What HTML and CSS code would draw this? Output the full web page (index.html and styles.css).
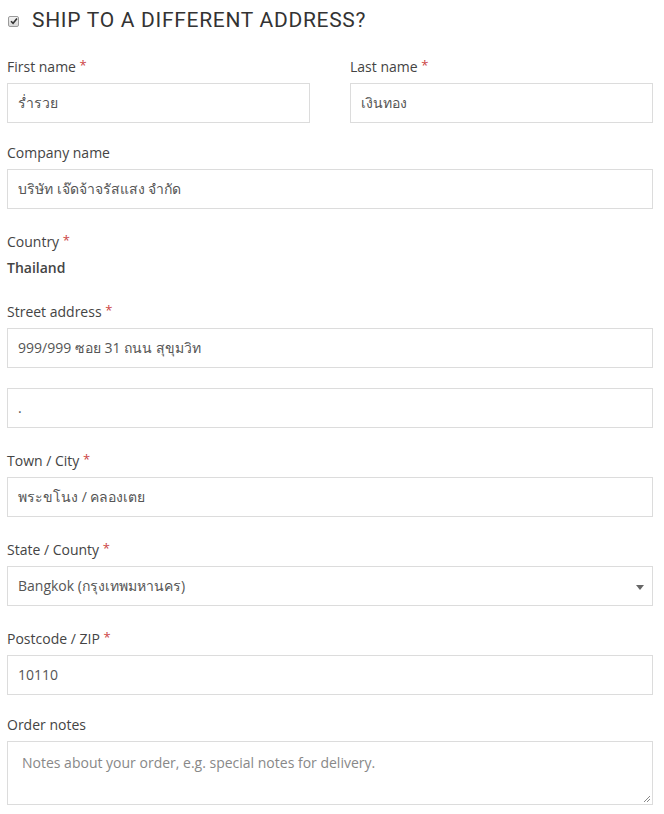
FILE: index.html
```html
<!DOCTYPE html>
<html lang="th">
<head>
    <meta charset="UTF-8">
    <meta name="viewport" content="width=device-width, initial-scale=1.0">
    <title>Shipping address</title>
    <link rel="stylesheet" href="styles.css">
</head>
<body>
    <div class="shipping">
        <h3 class="ship-title">
            <span class="check-box">
                <svg width="8" height="8" viewBox="0 0 8 8"><path d="M1 4.2 L3.1 6.3 L7 1.6" fill="none" stroke="#333" stroke-width="1.6"/></svg>
            </span>
            SHIP TO A DIFFERENT ADDRESS?
        </h3>

        <div class="row-2">
            <div class="field">
                <label>First name <abbr class="required">*</abbr></label>
                <div class="input">ร่ำรวย</div>
            </div>
            <div class="field">
                <label>Last name <abbr class="required">*</abbr></label>
                <div class="input">เงินทอง</div>
            </div>
        </div>

        <div class="field">
            <label>Company name</label>
            <div class="input">บริษัท เจ๊ดจ้าจรัสแสง จำกัด</div>
        </div>

        <div class="field">
            <label>Country <abbr class="required">*</abbr></label>
            <strong class="country">Thailand</strong>
        </div>

        <div class="field">
            <label>Street address <abbr class="required">*</abbr></label>
            <div class="input">999/999 ซอย 31 ถนน สุขุมวิท</div>
            <div class="input second">.</div>
        </div>

        <div class="field">
            <label>Town / City <abbr class="required">*</abbr></label>
            <div class="input">พระขโนง / คลองเตย</div>
        </div>

        <div class="field">
            <label>State / County <abbr class="required">*</abbr></label>
            <div class="input select">Bangkok (กรุงเทพมหานคร)<span class="arrow"></span></div>
        </div>

        <div class="field">
            <label>Postcode / ZIP <abbr class="required">*</abbr></label>
            <div class="input">10110</div>
        </div>
    </div>

    <div class="additional">
        <div class="field">
            <label>Order notes</label>
            <div class="textarea">
                <span class="placeholder">Notes about your order, e.g. special notes for delivery.</span>
                <svg class="grip" width="9" height="9" viewBox="0 0 9 9"><path d="M8 2 L2 8 M8 5 L5 8" stroke="#888" stroke-width="1"/></svg>
            </div>
        </div>
    </div>
</body>
</html>
```

FILE: styles.css
```css
body {
    font-family: 'Open Sans', 'Noto Sans', sans-serif;
    font-size: 14px;
    color: #555;
    margin: 0;
    padding: 0 11px 0 7px;
    background: #fff;
}
.ship-title {
    display: flex;
    align-items: center;
    margin: 0 0 25px;
    padding-top: 8px;
    height: 24px;
    font-family: 'Roboto', 'Liberation Sans', sans-serif;
    font-weight: 400;
    font-size: 21px;
    letter-spacing: 0.7px;
    color: #333;
}
.check-box {
    display: inline-flex;
    align-items: center;
    justify-content: center;
    width: 9px;
    height: 9px;
    margin: 2px 13px 0 1px;
    border: 1px solid #9a9a9a;
    border-radius: 2px;
    background: linear-gradient(#f2f2f2, #d8d8d8);
}
.row-2 {
    display: grid;
    grid-template-columns: 1fr 1fr;
    column-gap: 40px;
    margin-bottom: 20px;
}
.row-2 .field {
    margin-bottom: 0;
}
.field {
    margin-bottom: 23px;
}
.shipping .field:last-child {
    margin-bottom: 0;
}
.field label {
    display: block;
    line-height: 20px;
    margin-bottom: 6px;
    color: #444;
}
.required {
    position: relative;
    top: -2px;
    font-size: 13px;
    color: #cc4444;
    text-decoration: none;
    border: none;
}
.input {
    position: relative;
    height: 38px;
    line-height: 38px;
    padding: 0 10px;
    border: 1px solid #dcdcdc;
    color: #555;
}
.input.second {
    margin-top: 20px;
}
.country {
    display: block;
    line-height: 20px;
    margin-bottom: 24px;
    font-weight: 600;
    color: #444;
}
.field:has(.country) {
    margin-bottom: 0;
}
.arrow {
    position: absolute;
    right: 8px;
    top: 18px;
    border-left: 4px solid transparent;
    border-right: 4px solid transparent;
    border-top: 5px solid #666;
}
.additional {
    margin-top: 20px;
}
.textarea {
    position: relative;
    height: 43px;
    padding: 11px 14px 8px;
    border: 1px solid #dcdcdc;
}
.placeholder {
    color: #888;
}
.grip {
    position: absolute;
    right: 1px;
    bottom: 1px;
}
```
